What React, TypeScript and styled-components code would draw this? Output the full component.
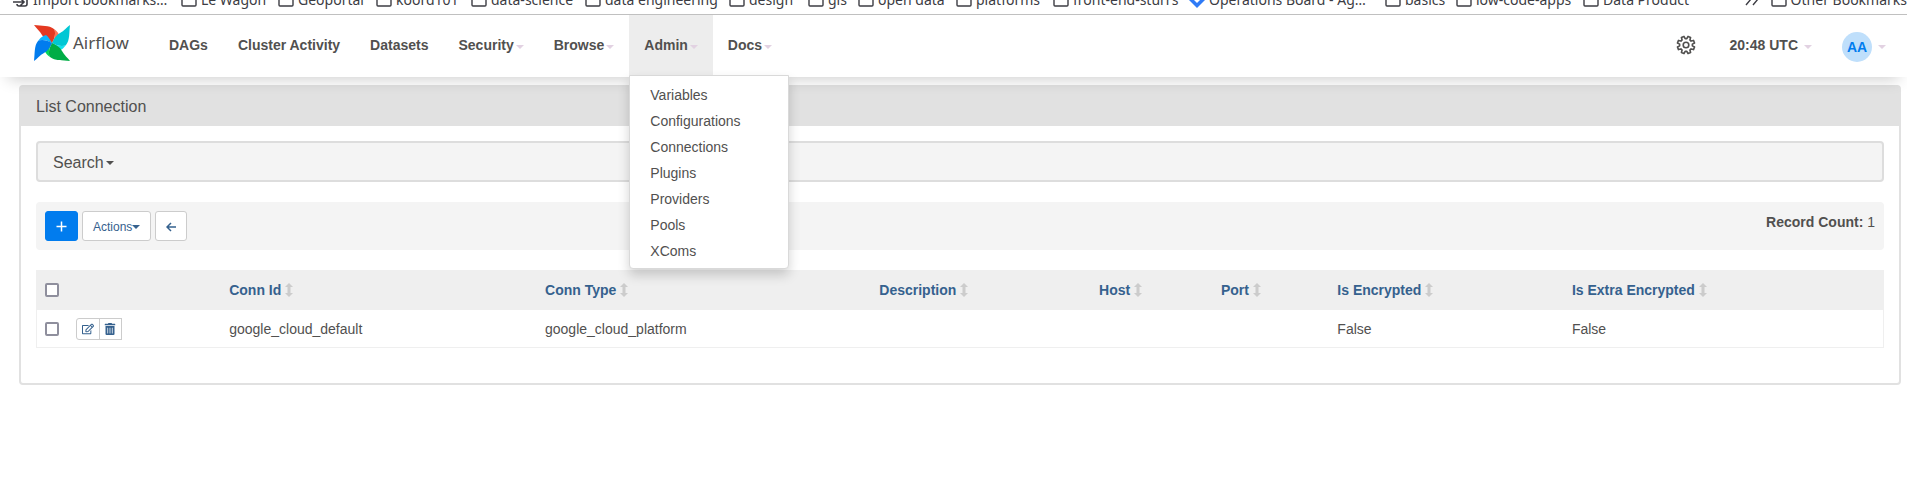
import React from 'react';
import styled, { createGlobalStyle, css } from 'styled-components';
import { FaRegEdit, FaTrashAlt } from 'react-icons/fa';

const GlobalStyle = createGlobalStyle`
  *, *::before, *::after { box-sizing: border-box; }
  body {
    margin: 0;
    background: #fff;
    color: #51504f;
    font: 14px/20px "Liberation Sans", Arial, sans-serif;
  }
  a { color: inherit; text-decoration: none; }
`;

const BookmarkBar = styled.nav`
  display: flex;
  align-items: flex-end;
  height: 15px;
  overflow: hidden;
  padding-left: 13px;
  border-bottom: 1px solid #c0c0c0;
  color: #3c3c43;
  font: 14px/20px "Noto Sans", sans-serif;
`;

const Bookmark = styled.a<{ $width?: number }>`
  display: flex;
  flex: none;
  align-items: center;
  gap: 4px;
  width: ${({ $width }) => ($width ? `${$width}px` : 'auto')};
  height: 20px;
  margin-bottom: 4px;
  white-space: nowrap;
  svg { flex: none; }
`;

const Overflow = styled.button`
  flex: none;
  width: 26px;
  height: 20px;
  margin: 0 0 4px auto;
  padding: 0;
  border: 0;
  background: none;
  text-align: left;
`;

const Header = styled.header`
  position: relative;
  z-index: 2;
  display: flex;
  height: 62px;
  padding: 0 6px 0 34px;
  background: #fff;
  box-shadow: 0 10px 16px -8px rgba(0, 0, 0, 0.2);
`;

const Brand = styled.a`
  display: flex;
  align-items: center;
  gap: 3px;
  height: 56px;
  width: 120px;
  font: 17px/24px "Noto Sans", sans-serif;
`;

const Menu = styled.ul<{ $end?: boolean }>`
  display: flex;
  margin: 0;
  padding: 0;
  list-style: none;
  ${({ $end }) => $end && css`margin-left: auto;`}
`;

const MenuItem = styled.li`
  position: relative;
`;

const MenuLink = styled.a<{ $open?: boolean }>`
  display: flex;
  align-items: center;
  gap: 2px;
  height: 60px;
  padding: 0 15px;
  background: ${({ $open }) => ($open ? '#ededed' : 'transparent')};
  font-weight: 700;
`;

const Caret = styled.span<{ $tone?: string; $spaced?: boolean }>`
  display: inline-block;
  width: 0;
  height: 0;
  margin-left: ${({ $spaced }) => ($spaced ? '4px' : '0')};
  border-top: 4px solid ${({ $tone }) => $tone || '#e2d2e2'};
  border-right: 4px solid transparent;
  border-left: 4px solid transparent;
  vertical-align: middle;
`;

const MenuCaret = styled(Caret)`
  margin-top: 4px;
`;

const IconLink = styled(MenuLink)`
  margin-right: 4px;
`;

const Avatar = styled.span`
  display: flex;
  align-items: center;
  justify-content: center;
  width: 30px;
  height: 30px;
  margin-top: 4px;
  border-radius: 50%;
  background: #bfdffb;
  color: #017cee;
`;

const Dropdown = styled.ul`
  position: absolute;
  top: 60px;
  left: 0;
  min-width: 160px;
  margin: 0;
  padding: 6px 0 4px;
  border: 1px solid #d9d9d9;
  border-radius: 0 0 4px 4px;
  background: #fff;
  box-shadow: 0 6px 12px rgba(0, 0, 0, 0.18);
  list-style: none;
`;

const DropdownLink = styled.a`
  display: block;
  padding: 3px 20px;
`;

const Main = styled.main`
  padding: 8px 6px 20px 19px;
`;

const Panel = styled.section`
  border: 2px solid #e1e1e1;
  border-radius: 4px;
`;

const PanelTitle = styled.h1`
  margin: 0;
  padding: 10px 15px 9px;
  background: #e1e1e1;
  font-size: 16px;
  font-weight: 400;
  line-height: 20px;
`;

const PanelBody = styled.div`
  padding: 15px 15px 35px;
`;

const SearchToggle = styled.button`
  display: flex;
  align-items: center;
  gap: 2px;
  width: 100%;
  height: 41px;
  padding: 2px 15px 0;
  border: 2px solid #ddd;
  border-radius: 4px;
  background: #f4f4f4;
  color: inherit;
  font: 16px/20px "Liberation Sans", Arial, sans-serif;
`;

const Toolbar = styled.div`
  display: flex;
  gap: 4px;
  margin: 20px 0;
  padding: 9px;
  border-radius: 4px;
  background: #f4f4f4;
`;

const Button = styled.button<{ $primary?: boolean }>`
  display: flex;
  align-items: center;
  height: 30px;
  padding: 1px 10px 0;
  border: 1px solid ${({ $primary }) => ($primary ? '#017cee' : '#ccc')};
  border-radius: 3px;
  background: ${({ $primary }) => ($primary ? '#017cee' : '#fff')};
  color: ${({ $primary }) => ($primary ? '#fff' : '#35618e')};
  font: 12px/18px "Liberation Sans", Arial, sans-serif;
`;

const RecordCount = styled.p`
  margin: 1px 0 0 auto;
`;

const Table = styled.table`
  width: 100%;
  border: 1px solid #efefef;
  border-collapse: collapse;
  table-layout: fixed;
`;

const HeadCell = styled.th`
  height: 39px;
  padding: 0 8px;
  background: #efefef;
  color: #35618e;
  text-align: left;
`;

const SortLink = styled.a`
  display: flex;
  align-items: center;
  gap: 4px;
`;

const Cell = styled.td`
  height: 38px;
  padding: 2px 8px 0;
`;

const Checkbox = styled.input`
  display: block;
  width: 14px;
  height: 14px;
  margin: 0;
  border: 2px solid #8f8f9d;
  border-radius: 2px;
  background: #fff;
  appearance: none;
`;

const ButtonGroup = styled.div`
  display: flex;
`;

const SmallButton = styled.button`
  display: flex;
  align-items: center;
  justify-content: center;
  width: 23px;
  height: 22px;
  padding: 0;
  border: 1px solid #ccc;
  background: #fff;
  color: #35618e;
  &:first-child { width: 24px; border-radius: 3px 0 0 3px; }
  & + & { margin-left: -1px; }
`;

const Folder = () => (
  <svg width="16" height="16" viewBox="0 0 16 16" fill="none" stroke="#3c3c43" strokeWidth="1.4">
    <path d="M1 3a1 1 0 0 1 1-1h4l2 2h6a1 1 0 0 1 1 1v8a1 1 0 0 1-1 1H2a1 1 0 0 1-1-1z" />
  </svg>
);

const ImportIcon = () => (
  <svg width="16" height="16" viewBox="0 0 16 16" fill="none" stroke="#3c3c43" strokeWidth="1.6">
    <path d="M5 2h7a2 2 0 0 1 2 2v8a2 2 0 0 1-2 2H6a2 2 0 0 1-2-2M0 10h10M7 6l4 4-4 4" />
  </svg>
);

const BoardIcon = () => (
  <svg width="16" height="16" viewBox="0 0 16 16">
    <path d="M8 0l8 8-8 8-8-8z" fill="#2f7bf6" />
    <path d="M8 5l3 3-3 3-3-3z" fill="#fff" />
  </svg>
);

const blades = [
  { turn: 0, main: '#e43921', light: '#ff7557' },
  { turn: 90, main: '#00c7d4', light: '#11e1ee' },
  { turn: 180, main: '#00ad46', light: '#04d659' },
  { turn: 270, main: '#017cee', light: '#0cb6ff' },
];

const Pinwheel = () => (
  <svg width="36" height="36" viewBox="0 0 36 36">
    {blades.map(({ turn, main, light }) => (
      <g key={turn} transform={`rotate(${turn} 18 18)`}>
        <path d="M18 18C21 13 22 8 20 4C24 7 25 9 26 12C24 15 21 16 18 18Z" fill={light} />
        <path d="M18 18C14 16 10 14 8 10C6 6 2 3 0 0C8 1 15 0 20 4C22 7 21 13 18 18Z" fill={main} />
      </g>
    ))}
  </svg>
);

const gearPoints = Array.from({ length: 8 }, (_, tooth) =>
  [[-15, 6.4], [-9, 8.8], [9, 8.8], [15, 6.4]].map(([offset, radius]) => {
    const angle = ((tooth * 45 + 22.5 + offset) * Math.PI) / 180;
    return `${(10 + radius * Math.cos(angle)).toFixed(2)},${(10 + radius * Math.sin(angle)).toFixed(2)}`;
  }).join(' '),
).join(' ');

const Gear = () => (
  <svg width="20" height="20" viewBox="0 0 20 20" fill="none" stroke="#51504f" strokeWidth="1.6" strokeLinejoin="round">
    <circle cx="10" cy="10" r="2.8" />
    <polygon points={gearPoints} />
  </svg>
);

const PlusIcon = () => (
  <svg width="11" height="11" viewBox="0 0 11 11" fill="none" stroke="currentColor" strokeWidth="1.5">
    <path d="M5.500 0.500v10M0.500 5.500h10" />
  </svg>
);

const BackIcon = () => (
  <svg width="10" height="10" viewBox="0 0 10 10" fill="none" stroke="currentColor" strokeWidth="1.5">
    <path d="M10 5H1M5 1L1 5l4 4" />
  </svg>
);

const SortIcon = () => (
  <svg width="8" height="14" viewBox="0 0 8 14" fill="#ccc">
    <path d="M4 0l4 4H5.500v6H8l-4 4-4-4h2.500V4H0z" />
  </svg>
);

const bookmarks = [
  { label: 'Le Wagon', width: 97 },
  { label: 'Geoportal', width: 98 },
  { label: 'koord101', width: 95 },
  { label: 'data-science', width: 114 },
  { label: 'data engineering', width: 144 },
  { label: 'design', width: 79 },
  { label: 'gis', width: 50 },
  { label: 'open data', width: 98 },
  { label: 'platforms', width: 97 },
  { label: 'front-end-sturrs', width: 136 },
  { label: 'Operations Board - Ag…', width: 196, board: true },
  { label: 'basics', width: 71 },
  { label: 'low-code-apps', width: 127 },
  { label: 'Data Product', width: 120 },
];

const nav = [
  { label: 'DAGs' },
  { label: 'Cluster Activity' },
  { label: 'Datasets' },
  { label: 'Security', caret: true },
  { label: 'Browse', caret: true },
  {
    label: 'Admin',
    caret: true,
    items: ['Variables', 'Configurations', 'Connections', 'Plugins', 'Providers', 'Pools', 'XComs'],
  },
  { label: 'Docs', caret: true },
];

const columns = [
  { label: 'Conn Id', width: '17.1%' },
  { label: 'Conn Type', width: '18.1%' },
  { label: 'Description', width: '11.9%' },
  { label: 'Host', width: '6.6%' },
  { label: 'Port', width: '6.3%' },
  { label: 'Is Encrypted', width: '12.7%' },
  { label: 'Is Extra Encrypted', width: 'auto' },
];

const rows = [['google_cloud_default', 'google_cloud_platform', '', '', '', 'False', 'False']];

export default function App() {
  return (
    <>
      <GlobalStyle />
      <BookmarkBar aria-label="Bookmarks">
        <Bookmark href="#" $width={168}><ImportIcon />Import bookmarks…</Bookmark>
        {bookmarks.map(({ label, width, board }) => (
          <Bookmark key={label} href="#" $width={width}>
            {board ? <BoardIcon /> : <Folder />}{label}
          </Bookmark>
        ))}
        <Overflow aria-label="More bookmarks">
          <svg width="14" height="14" viewBox="0 0 14 14" fill="none" stroke="#3c3c43" strokeWidth="1.4">
            <path d="M1 1l5 6-5 6M8 1l5 6-5 6" />
          </svg>
        </Overflow>
        <Bookmark href="#"><Folder />Other Bookmarks</Bookmark>
      </BookmarkBar>
      <Header>
        <Brand href="#"><Pinwheel />Airflow</Brand>
        <Menu>
          {nav.map(({ label, caret, items }) => (
            <MenuItem key={label}>
              <MenuLink href="#" $open={Boolean(items)}>{label}{caret && <MenuCaret />}</MenuLink>
              {items && (
                <Dropdown>
                  {items.map((item) => <li key={item}><DropdownLink href="#">{item}</DropdownLink></li>)}
                </Dropdown>
              )}
            </MenuItem>
          ))}
        </Menu>
        <Menu $end>
          <MenuItem><IconLink href="#" aria-label="Settings"><Gear /></IconLink></MenuItem>
          <MenuItem><MenuLink href="#">20:48 UTC<MenuCaret $spaced /></MenuLink></MenuItem>
          <MenuItem><MenuLink href="#"><Avatar>AA</Avatar><MenuCaret $spaced /></MenuLink></MenuItem>
        </Menu>
      </Header>
      <Main>
        <Panel>
          <PanelTitle>List Connection</PanelTitle>
          <PanelBody>
            <SearchToggle>Search<Caret $tone="#51504f" /></SearchToggle>
            <Toolbar>
              <Button $primary aria-label="Add"><PlusIcon /></Button>
              <Button>Actions<Caret $tone="#35618e" /></Button>
              <Button aria-label="Back"><BackIcon /></Button>
              <RecordCount><strong>Record Count:</strong> 1</RecordCount>
            </Toolbar>
            <Table>
              <colgroup>
                <col style={{ width: '1.7%' }} />
                <col style={{ width: '8.3%' }} />
                {columns.map(({ label, width }) => <col key={label} style={{ width }} />)}
              </colgroup>
              <thead>
                <tr>
                  <HeadCell><Checkbox type="checkbox" aria-label="Select all" /></HeadCell>
                  <HeadCell />
                  {columns.map(({ label }) => (
                    <HeadCell key={label}><SortLink href="#">{label}<SortIcon /></SortLink></HeadCell>
                  ))}
                </tr>
              </thead>
              <tbody>
                {rows.map((row) => (
                  <tr key={row[0]}>
                    <Cell><Checkbox type="checkbox" aria-label={`Select ${row[0]}`} /></Cell>
                    <Cell>
                      <ButtonGroup>
                        <SmallButton aria-label="Edit"><FaRegEdit size={12} /></SmallButton>
                        <SmallButton aria-label="Delete"><FaTrashAlt size={12} /></SmallButton>
                      </ButtonGroup>
                    </Cell>
                    {row.map((value, i) => <Cell key={i}>{value}</Cell>)}
                  </tr>
                ))}
              </tbody>
            </Table>
          </PanelBody>
        </Panel>
      </Main>
    </>
  );
}
